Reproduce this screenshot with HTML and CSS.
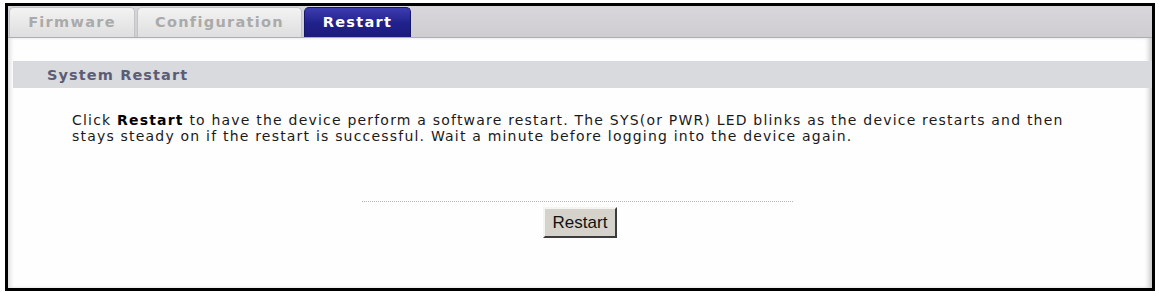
FILE: index.html
```html
<!DOCTYPE html>
<html>
<head>
<meta charset="utf-8">
<link rel="stylesheet" href="styles.css">
</head>
<body>
<div class="frame">
  <div class="tabbar">
    <div class="tab">Firmware</div>
    <div class="tab tab-wide">Configuration</div>
    <div class="tab tab-active">Restart</div>
  </div>
  <div class="content">
    <div class="section-head">System Restart</div>
    <p class="desc">Click <b>Restart</b> to have the device perform a software restart. The SYS(or PWR) LED blinks as the device restarts and then stays steady on if the restart is successful. Wait a minute before logging into the device again.</p>
    <div class="actions">
      <div class="dots"></div>
      <button class="btn">Restart</button>
    </div>
  </div>
</div>
</body>
</html>
```

FILE: styles.css
```css
html, body {
  margin: 0;
  padding: 0;
  background: #ffffff;
}
.frame {
  margin: 3px 0 0 5px;
  width: 1144px;
  height: 282px;
  border: 3px solid #000;
  display: flex;
  flex-direction: column;
  font-family: "DejaVu Sans", Verdana, sans-serif;
}
.tabbar {
  height: 31px;
  background: linear-gradient(#d8d6da, #cfcdd2);
  border-bottom: 1px solid #aeadb2;
  display: flex;
  align-items: flex-end;
  gap: 2px;
  padding-left: 1px;
}
.tab {
  width: 126px;
  height: 30px;
  box-sizing: border-box;
  background: linear-gradient(#f3f3f3, #dedede);
  border: 1px solid #c4c4c4;
  border-bottom: none;
  border-radius: 5px 5px 0 0;
  color: #aaaaaa;
  font-weight: bold;
  font-size: 14.5px;
  letter-spacing: 1.3px;
  display: flex;
  align-items: center;
  justify-content: center;
  padding-bottom: 2px;
}
.tab-wide {
  width: 165px;
}
.tab-active {
  width: 107px;
  background: linear-gradient(#3c3cb2, #20208a 55%, #1c1c7e);
  border-color: #15156a;
  color: #ffffff;
}
.content {
  flex: 1;
  background: #fefefe;
  box-shadow: inset 4px 0 4px -2px #d8d8d8, inset -5px 0 5px -2px #c8c8c8;
  padding: 23px 0 0 5px;
  display: flex;
  flex-direction: column;
}
.section-head {
  height: 27px;
  background: #d9dadd;
  color: #5b5d76;
  font-weight: bold;
  font-size: 14.5px;
  letter-spacing: 1.1px;
  line-height: 28px;
  padding-left: 34px;
}
.desc {
  margin: 24px 0 0 59px;
  width: 1020px;
  font-size: 14px;
  line-height: 16px;
  color: #1a1a1a;
  letter-spacing: 1.2px;
}
.desc b {
  color: #000;
}
.actions {
  margin-top: 57px;
  display: flex;
  flex-direction: column;
  align-items: center;
}
.dots {
  width: 431px;
  border-top: 1px dotted #b4b4b4;
  margin-left: -11px;
}
.btn {
  margin-top: 5px;
  margin-left: -5px;
  width: 74px;
  height: 31px;
  background: #d5d2cb;
  border: 2px solid;
  border-color: #f4f4f0 #3c3c3c #3c3c3c #f4f4f0;
  font-family: "Liberation Sans", Arial, sans-serif;
  font-size: 17px;
  color: #111;
  padding: 0;
}
```
